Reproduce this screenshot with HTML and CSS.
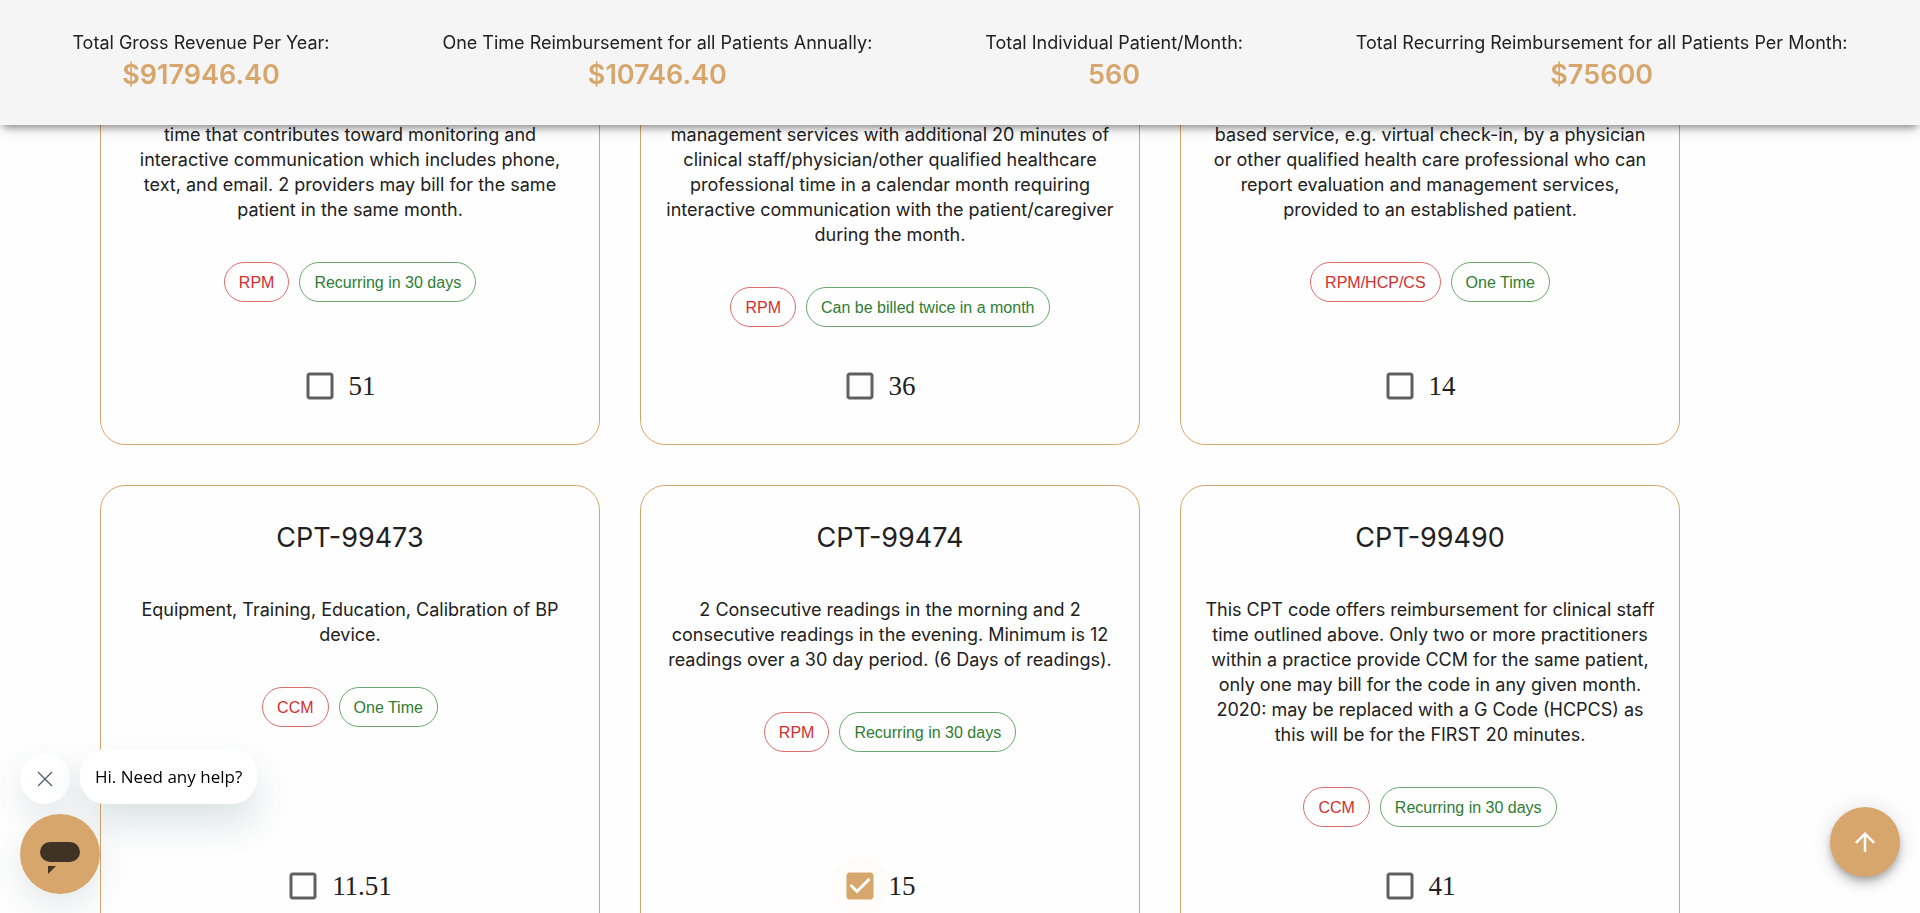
FILE: index.html
```html
<!DOCTYPE html>
<html lang="en">
<head>
<meta charset="utf-8">
<title>Reimbursement calculator</title>
<link rel="stylesheet" href="styles.css">
</head>
<body>
<svg class="sprite" aria-hidden="true">
  <symbol id="box" viewBox="0 0 24 24"><path d="M19 5v14H5V5h14m0-2H5c-1.1 0-2 .9-2 2v14c0 1.1.9 2 2 2h14c1.1 0 2-.9 2-2V5c0-1.1-.9-2-2-2z"/></symbol>
  <symbol id="box-checked" viewBox="0 0 24 24"><path d="M19 3H5c-1.11 0-2 .9-2 2v14c0 1.1.89 2 2 2h14c1.11 0 2-.9 2-2V5c0-1.1-.89-2-2-2zm-9 14l-5-5 1.41-1.41L10 14.17l7.59-7.59L19 8l-9 9z"/></symbol>
</svg>

<header class="summary">
  <div class="stat"><span class="stat-label">Total Gross Revenue Per Year:</span><strong class="stat-value">$917946.40</strong></div>
  <div class="stat"><span class="stat-label">One Time Reimbursement for all Patients Annually:</span><strong class="stat-value">$10746.40</strong></div>
  <div class="stat"><span class="stat-label">Total Individual Patient/Month:</span><strong class="stat-value">560</strong></div>
  <div class="stat"><span class="stat-label">Total Recurring Reimbursement for all Patients Per Month:</span><strong class="stat-value">$75600</strong></div>
</header>

<main class="codes">
  <article class="card card-scrolled">
    <p class="card-text">time that contributes toward monitoring and interactive communication which includes phone, text, and email. 2 providers may bill for the same patient in the same month.</p>
    <div class="chips"><span class="chip chip-red">RPM</span><span class="chip chip-green">Recurring in 30 days</span></div>
    <label class="pick"><span class="check"><input class="check-input" type="checkbox"><svg class="check-icon"><use href="#box"/></svg></span>51</label>
  </article>
  <article class="card card-scrolled">
    <p class="card-text">management services with additional 20 minutes of clinical staff/physician/other qualified healthcare professional time in a calendar month requiring interactive communication with the patient/caregiver during the month.</p>
    <div class="chips"><span class="chip chip-red">RPM</span><span class="chip chip-green">Can be billed twice in a month</span></div>
    <label class="pick"><span class="check"><input class="check-input" type="checkbox"><svg class="check-icon"><use href="#box"/></svg></span>36</label>
  </article>
  <article class="card card-scrolled">
    <p class="card-text">based service, e.g. virtual check-in, by a physician or other qualified health care professional who can report evaluation and management services, provided to an established patient.</p>
    <div class="chips"><span class="chip chip-red">RPM/HCP/CS</span><span class="chip chip-green">One Time</span></div>
    <label class="pick"><span class="check"><input class="check-input" type="checkbox"><svg class="check-icon"><use href="#box"/></svg></span>14</label>
  </article>
  <article class="card">
    <h2 class="card-title">CPT-99473</h2>
    <p class="card-text">Equipment, Training, Education, Calibration of BP device.</p>
    <div class="chips"><span class="chip chip-red">CCM</span><span class="chip chip-green">One Time</span></div>
    <label class="pick"><span class="check"><input class="check-input" type="checkbox"><svg class="check-icon"><use href="#box"/></svg></span>11.51</label>
  </article>
  <article class="card">
    <h2 class="card-title">CPT-99474</h2>
    <p class="card-text">2 Consecutive readings in the morning and 2 consecutive readings in the evening. Minimum is 12 readings over a 30 day period. (6 Days of readings).</p>
    <div class="chips"><span class="chip chip-red">RPM</span><span class="chip chip-green">Recurring in 30 days</span></div>
    <label class="pick"><span class="check check-on"><input class="check-input" type="checkbox" checked><svg class="check-icon"><use href="#box-checked"/></svg></span>15</label>
  </article>
  <article class="card">
    <h2 class="card-title">CPT-99490</h2>
    <p class="card-text">This CPT code offers reimbursement for clinical staff time outlined above. Only two or more practitioners within a practice provide CCM for the same patient, only one may bill for the code in any given month. 2020: may be replaced with a G Code (HCPCS) as this will be for the FIRST 20 minutes.</p>
    <div class="chips"><span class="chip chip-red">CCM</span><span class="chip chip-green">Recurring in 30 days</span></div>
    <label class="pick"><span class="check"><input class="check-input" type="checkbox"><svg class="check-icon"><use href="#box"/></svg></span>41</label>
  </article>
</main>

<aside class="chat">
  <div class="chat-row">
    <button class="chat-close" type="button" aria-label="Close"><svg width="16" height="16" viewBox="0 0 16 16"><path d="M1 1l14 14M15 1L1 15" fill="none" stroke="#4f5e6b" stroke-width="1.3"/></svg></button>
    <button class="chat-message" type="button">Hi. Need any help?</button>
  </div>
  <button class="chat-open" type="button" aria-label="Open chat"><svg width="40" height="32" viewBox="0 0 40 32"><rect width="40" height="20" rx="10" fill="#403224"/><path d="M8 24h8l-8 8z" fill="#403224"/></svg></button>
</aside>

<button class="to-top" type="button" aria-label="Back to top"><svg width="30" height="30" viewBox="0 0 24 24"><path d="M4 12l1.41 1.41L11 7.83V20h2V7.83l5.58 5.59L20 12l-8-8-8 8z" fill="#fff"/></svg></button>
</body>
</html>
```
FILE: styles.css
```css
* { box-sizing: border-box; }

body {
  margin: 0;
  height: 100vh;
  overflow: hidden;
  background: #fefefe;
  color: #212121;
  font-family: Inter, "Liberation Sans", sans-serif;
  font-size: 18px;
  line-height: 25px;
}

.sprite { position: absolute; width: 0; height: 0; }

.summary {
  position: fixed;
  inset: 0 0 auto;
  z-index: 2;
  display: flex;
  justify-content: space-around;
  padding: 30px 16px;
  background: #f5f5f5;
  box-shadow: 0 5px 8px -3px rgba(0, 0, 0, .45), 0 4px 16px rgba(0, 0, 0, .1);
}
.stat { display: flex; flex-direction: column; align-items: center; }
.stat-value { color: #d7a66c; font-size: 27px; font-weight: 600; line-height: 40px; }

.codes {
  display: grid;
  grid-template-columns: repeat(3, minmax(0, 500px));
  gap: 40px;
  padding: 0 100px;
}
.card {
  display: flex;
  flex-direction: column;
  align-items: center;
  min-height: 460px;
  padding: 32px 23px 29px;
  border: 1px solid #d7a66c;
  border-radius: 25px;
  text-align: center;
}
.card-scrolled { min-height: 445px; padding-top: 121px; }
.card-title { margin: 0 0 39px; font-size: 27px; font-weight: 400; line-height: 40px; }
.card-text { margin: 0 0 40px; }

.chips { display: flex; gap: 10px; }
.chip {
  height: 40px;
  padding: 0 14px;
  border: 1px solid;
  border-radius: 20px;
  font-family: "Liberation Sans", Arial, sans-serif;
  font-size: 16px;
  line-height: 40px;
}
.chip-red { color: #d32f2f; border-color: #e06c6c; }
.chip-green { color: #2e7d32; border-color: #6da770; }

.pick {
  display: flex;
  align-items: center;
  margin: auto 20px 0 -14px;
  font-family: "Liberation Serif", "Times New Roman", serif;
  font-size: 27px;
}
.check { display: grid; padding: 11px; border-radius: 50%; color: #606060; }
.check-on { background: #fdfcf8; color: #d7a66c; }
.check-input, .check-icon { grid-area: 1 / 1; width: 36px; height: 36px; margin: 0; }
.check-input { opacity: 0; }
.check-icon { fill: currentColor; pointer-events: none; }

button { padding: 0; border: 0; font: inherit; cursor: pointer; }

.chat {
  position: fixed;
  left: 20px;
  bottom: 19px;
  z-index: 3;
  display: flex;
  flex-direction: column;
  align-items: flex-start;
  gap: 10px;
}
.chat-row { display: flex; align-items: flex-end; gap: 10px; }
.chat-close, .chat-open {
  display: grid;
  place-items: center;
  border-radius: 50%;
  box-shadow: 0 12px 32px rgba(38, 78, 84, .12);
}
.chat-close { width: 50px; height: 50px; background: #fff; }
.chat-open { width: 80px; height: 80px; padding-top: 8px; background: #d7a66c; }
.chat-message {
  height: 55px;
  padding: 0 15px;
  border-radius: 25px;
  background: #fff;
  color: #000;
  font-family: "Open Sans", "Noto Sans", sans-serif;
  font-size: 17px;
  box-shadow: 0 20px 36px rgba(38, 78, 84, .16);
}

.to-top {
  position: fixed;
  right: 20px;
  bottom: 36px;
  z-index: 3;
  display: grid;
  place-items: center;
  width: 70px;
  height: 70px;
  border-radius: 50%;
  background: #d7a66c;
  box-shadow: 0 4px 6px -1px rgba(0, 0, 0, .2), 0 8px 12px rgba(0, 0, 0, .14), 0 1px 22px rgba(0, 0, 0, .12);
}
```
